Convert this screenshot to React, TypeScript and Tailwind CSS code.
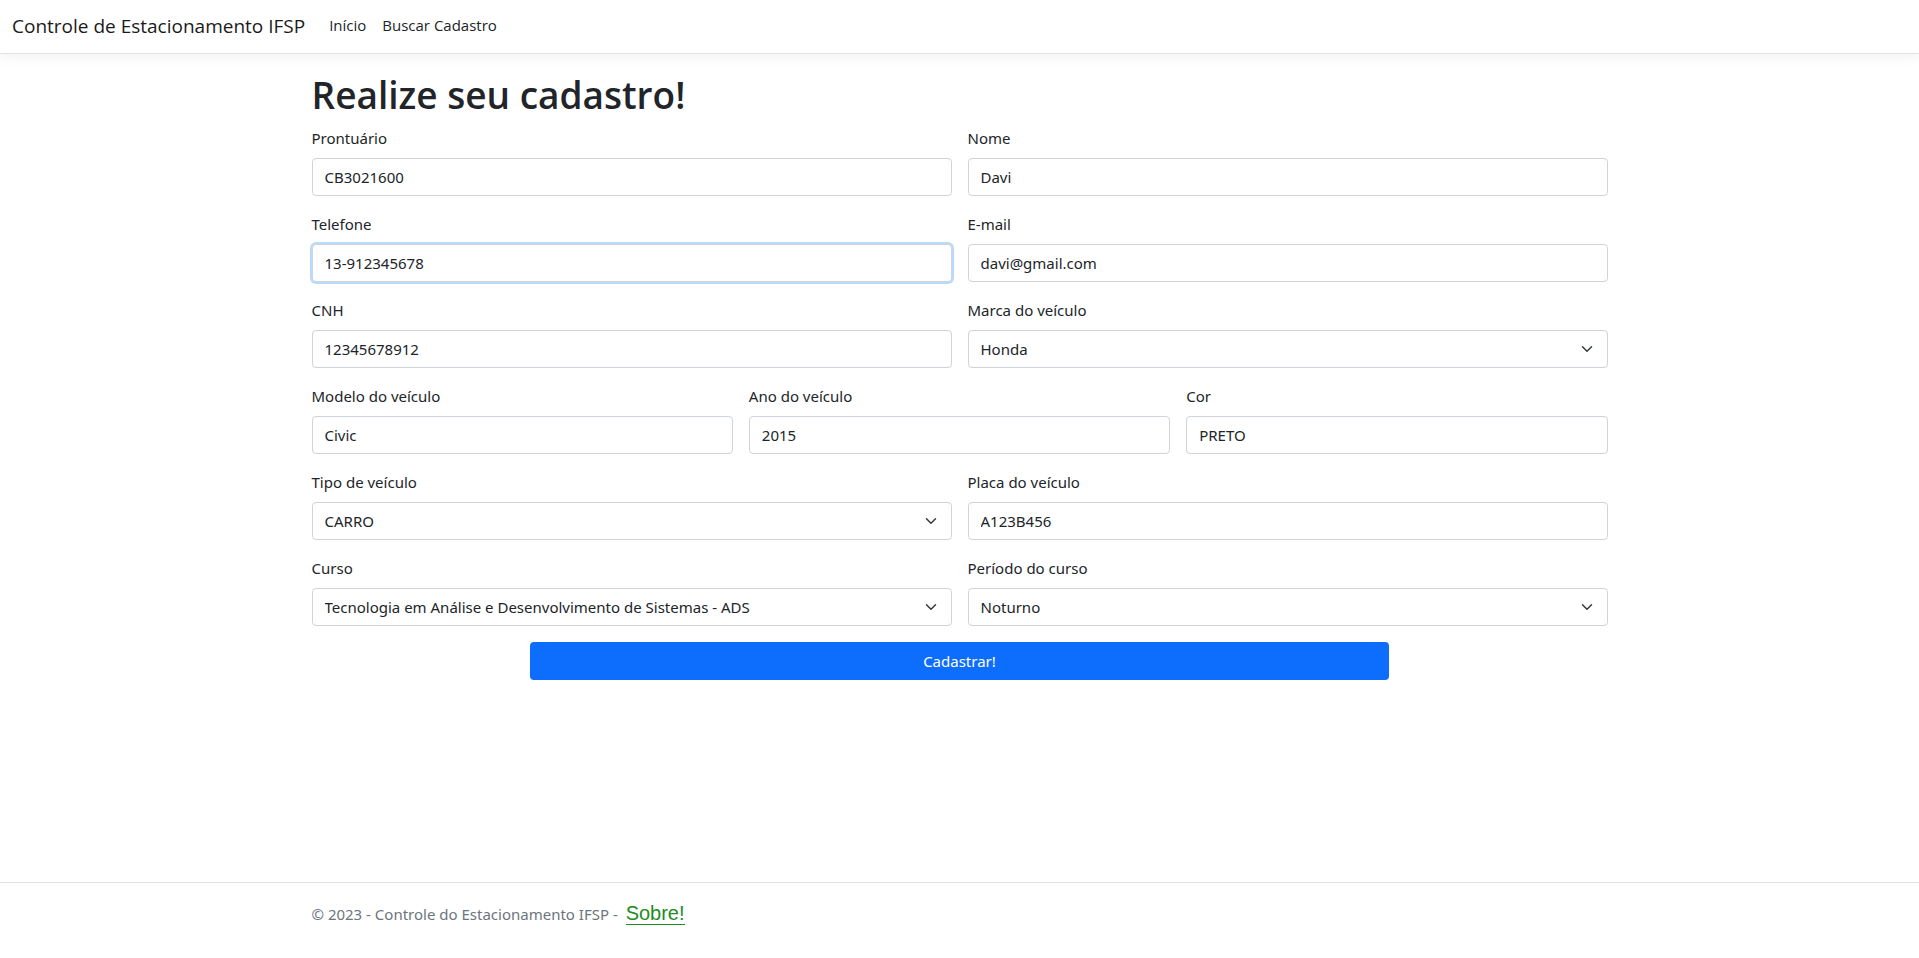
import type { ReactNode } from 'react';

const control =
  'h-[38px] w-full rounded-[4px] border border-[#ced4da] bg-white px-3 text-[15px] leading-6 text-[#212529] outline-none focus:border-[#86b7fe] focus:ring-3 focus:ring-[#b6d7ff]';

const half = 'col-span-12 md:col-span-6';
const third = 'col-span-12 md:col-span-4';

function Field({ id, label, span, children }: { id: string; label: string; span: string; children: ReactNode }) {
  return (
    <div className={span}>
      <label htmlFor={id} className="mb-2 block">
        {label}
      </label>
      {children}
    </div>
  );
}

function TextField({
  id,
  label,
  value,
  span = half,
  type = 'text',
  focused = false,
}: {
  id: string;
  label: string;
  value: string;
  span?: string;
  type?: string;
  focused?: boolean;
}) {
  return (
    <Field id={id} label={label} span={span}>
      <input
        id={id}
        type={type}
        defaultValue={value}
        className={focused ? `${control} border-[#a6cbf8] ring-2 ring-[#b9dafc]` : control}
      />
    </Field>
  );
}

function SelectField({ id, label, options }: { id: string; label: string; options: string[] }) {
  return (
    <Field id={id} label={label} span={half}>
      <div className="grid items-center">
        <select id={id} className={`${control} col-start-1 row-start-1 appearance-none pr-9`}>
          {options.map((option) => (
            <option key={option}>{option}</option>
          ))}
        </select>
        <svg
          viewBox="0 0 16 16"
          className="pointer-events-none col-start-1 row-start-1 mr-[15px] size-3 justify-self-end"
          fill="none"
          stroke="#343a40"
          strokeWidth="2"
          strokeLinecap="round"
          strokeLinejoin="round"
          aria-hidden="true"
        >
          <path d="m2 5 6 6 6-6" />
        </svg>
      </div>
    </Field>
  );
}

export default function App() {
  return (
    <div className="flex min-h-screen flex-col bg-white font-['Segoe_UI','Noto_Sans',sans-serif] text-[15px] leading-6 text-[#212529]">
      <header className="mb-4 border-b border-[#dee2e6] bg-white shadow-[0_4px_12px_rgba(0,0,0,0.05)]">
        <nav className="flex items-start px-3 py-[6px] font-['Segoe_UI','Open_Sans',sans-serif]">
          <a href="#" className="mr-4 py-1 text-[19px] leading-[33px] text-[#1a1a1a]">
            Controle de Estacionamento IFSP
          </a>
          <a href="#" className="px-2 py-[7px]">
            Início
          </a>
          <a href="#" className="px-2 py-[7px]">
            Buscar Cadastro
          </a>
        </nav>
      </header>

      <main className="mx-auto w-full max-w-[1320px] flex-1 px-3 pb-4">
        <h1 className="mb-[6px] font-['Segoe_UI','Open_Sans',sans-serif] text-[37px] leading-[50px] font-semibold">
          Realize seu cadastro!
        </h1>
        <form className="grid grid-cols-12 gap-4" onSubmit={(event) => event.preventDefault()}>
          <TextField id="prontuario" label="Prontuário" value="CB3021600" />
          <TextField id="nome" label="Nome" value="Davi" />
          <TextField id="telefone" label="Telefone" value="13-912345678" type="tel" focused />
          <TextField id="email" label="E-mail" value="davi@gmail.com" type="email" />
          <TextField id="cnh" label="CNH" value="12345678912" />
          <SelectField id="marca" label="Marca do veículo" options={['Honda']} />
          <TextField id="modelo" label="Modelo do veículo" value="Civic" span={third} />
          <TextField id="ano" label="Ano do veículo" value="2015" span={third} />
          <TextField id="cor" label="Cor" value="PRETO" span={third} />
          <SelectField id="tipo" label="Tipo de veículo" options={['CARRO']} />
          <TextField id="placa" label="Placa do veículo" value="A123B456" />
          <SelectField
            id="curso"
            label="Curso"
            options={['Tecnologia em Análise e Desenvolvimento de Sistemas - ADS']}
          />
          <SelectField id="periodo" label="Período do curso" options={['Noturno']} />
          <button
            type="submit"
            className="col-span-8 col-start-3 h-[38px] rounded-[4px] bg-[#0d6efd] text-center text-white"
          >
            Cadastrar!
          </button>
        </form>
      </main>

      <footer className="border-t border-[#dee2e6] pb-[14px] text-[#6c757d]">
        <div className="mx-auto w-full max-w-[1320px] px-3 leading-[60px]">
          © 2023 - Controle do Estacionamento IFSP -{' '}
          <a
            href="#"
            className="ml-1 border-b border-[#228b22] font-['Liberation_Sans',Arial,sans-serif] text-[20px] text-[#228b22]"
          >
            Sobre!
          </a>
        </div>
      </footer>
    </div>
  );
}
